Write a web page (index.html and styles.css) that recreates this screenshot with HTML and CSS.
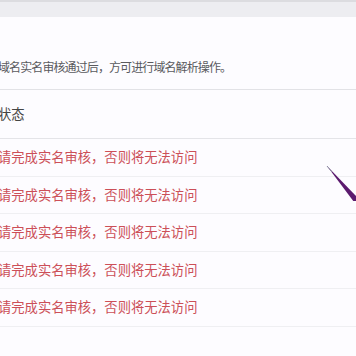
FILE: index.html
```html
<!DOCTYPE html>
<html lang="en">
<head>
  <meta charset="UTF-8">
  <title>域名解析</title>
  <link rel="stylesheet" href="styles.css">
</head>
<body>

<div class="topbar"></div>

<div class="panel">
  <p class="notice">域名实名审核通过后，方可进行域名解析操作。</p>

  <div class="table">
    <div class="thead">状态</div>
    <div class="row">请完成实名审核，否则将无法访问</div>
    <div class="row">请完成实名审核，否则将无法访问</div>
    <div class="row">请完成实名审核，否则将无法访问</div>
    <div class="row">请完成实名审核，否则将无法访问</div>
    <div class="row">请完成实名审核，否则将无法访问</div>
  </div>
</div>

<!-- pen stroke drawn over the screen -->
<svg class="pen" width="40" height="50" viewBox="0 0 40 50">
  <polygon points="10,15 11,16 40,46 40,51 37,51" fill="#5b1a6e"/>
  <line x1="10" y1="15" x2="15" y2="21" stroke="#8a8aa0" stroke-width="1"/>
</svg>

</body>
</html>
```

FILE: styles.css
```css
body {
  margin: 0;
  background: #fdfcff;
  font-family: "Noto Sans CJK SC", "Noto Sans", sans-serif;
  overflow: hidden;
  width: 356px;
  height: 356px;
  position: relative;
}

.topbar {
  height: 15px;
  border-top: 2px solid #dcdce0;
  background: #ededf1;
}

.panel {
  margin-left: -2px;
}

.notice {
  margin: 0;
  padding: 42px 0 14px;
  font-size: 12px;
  letter-spacing: -0.9px;
  line-height: 16px;
  color: #5a5a5e;
  border-bottom: 1px solid #e2e2e6;
}

.thead {
  height: 48px;
  line-height: 48px;
  font-size: 13.3px;
  color: #444;
  border-bottom: 1px solid #e4e4e8;
}

.row {
  height: 36.6px;
  line-height: 36px;
  font-size: 13.3px;
  color: #cc4f58;
  border-bottom: 1px solid #efeff2;
}

.pen {
  position: absolute;
  left: 317px;
  top: 151px;
}
```
